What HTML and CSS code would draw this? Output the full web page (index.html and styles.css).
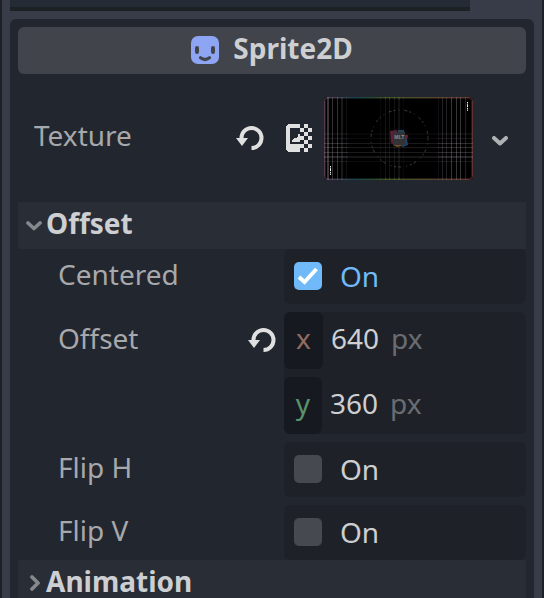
FILE: index.html
```html
<!DOCTYPE html>
<html lang="en">
<head>
<meta charset="utf-8">
<title>Inspector</title>
<link rel="stylesheet" href="styles.css">
</head>
<body>
<div class="dock">
  <div class="topbar"></div>
  <main class="panel">
    <header class="class-header">
      <svg class="sprite-icon" width="28" height="28" viewBox="0 0 28 28"><rect width="28" height="28" rx="7" fill="#8da5f3"/><rect x="4" y="10" width="4" height="8" rx="2" fill="#414549"/><rect x="20" y="10" width="4" height="8" rx="2" fill="#414549"/><path d="M9.500 21.800q4.500 3.400 9 0" fill="none" stroke="#414549" stroke-width="3.200" stroke-linecap="round"/></svg>
      <span>Sprite2D</span>
    </header>

    <section class="texture-row">
      <span class="label">Texture</span>
      <svg class="reset" width="28" height="28" viewBox="0 0 28 28"><path d="M5.500 14A10 10 0 1 1 15.500 24" fill="none" stroke="#e0e0e0" stroke-width="4"/><path d="M0 14h12l-6 8z" fill="#e0e0e0"/></svg>
      <svg class="texture-icon" width="26" height="28" viewBox="0 0 26 28" fill="#e0e0e0" shape-rendering="crispEdges"><path d="M2 0H14V4H4V20H14V28H2L0 26V2zM6 18V16L8 14H10L12 12V10H14V18z"/><path d="M18 0h4v4h-4zM14 4h4v4h-4zM22 4h4v4h-4zM18 8h4v4h-4zM14 12h4v4h-4zM22 12h4v4h-4zM18 16h4v4h-4zM14 20h4v4h-4zM22 20h4v4h-4zM18 24h4v4h-4z"/></svg>
      <svg class="thumb" width="149" height="83" viewBox="0 0 149 83">
        <defs>
          <linearGradient id="edge"><stop offset="0" stop-color="#563950"/><stop offset=".22" stop-color="#16444a"/><stop offset=".42" stop-color="#3d531d"/><stop offset=".65" stop-color="#514a2d"/><stop offset="1" stop-color="#633232"/></linearGradient>
          <radialGradient id="glow"><stop offset="0" stop-color="#555"/><stop offset="1" stop-color="#000" stop-opacity="0"/></radialGradient>
        </defs>
        <rect width="149" height="83" rx="3" fill="#010102"/>
        <rect x=".5" y=".5" width="148" height="82" rx="3" fill="none" stroke="url(#edge)"/>
        <rect x="1.500" y="1.500" width="146" height="80" rx="2" fill="none" stroke="url(#edge)" opacity=".4"/>
        <g stroke="#aaa0a8" fill="none">
          <path d="M4 0V83" stroke-width="2" opacity=".34"/>
          <path d="M8.500 0V83M13.500 0V83" opacity=".3"/>
          <path d="M18 0V83" stroke-width="2" opacity=".15"/>
          <path d="M22.500 0V83M56.500 0V83M79.500 0V83M114.500 0V83" opacity=".09"/>
          <path d="M61.500 0V83M65.500 0V83M70.500 0V83" opacity=".2"/>
          <path d="M75 0V83" stroke-width="2" opacity=".18"/>
          <path d="M118.500 0V83M122.500 0V83M141.500 0V83" opacity=".2"/>
          <path d="M127.500 0V83M132.500 0V83M136.500 0V83" opacity=".33"/>
          <path d="M0 37H149" stroke-width="2" opacity=".08"/>
          <path d="M0 41.500H149M0 64.500H149" opacity=".13"/>
          <path d="M0 46.500H149M0 50.500H149M0 55.500H149" opacity=".27"/>
          <path d="M0 60H149" stroke-width="2" opacity=".22"/>
        </g>
        <rect x="24" y="3" width="90" height="77" fill="#000" opacity=".4"/>
        <circle cx="75.500" cy="41.500" r="28.500" fill="none" stroke="#59605d" stroke-width=".8" stroke-dasharray="2 3 1 5 3 2" opacity=".8"/>
        <circle cx="75.500" cy="41.500" r="14" fill="url(#glow)" opacity=".6"/>
        <path d="M66 34l7-1 2 9-2 6-6-2z" fill="#5c2036"/><path d="M74 33h6l1 5h-7z" fill="#204257"/><path d="M79 38l5 1-1 3 1 6-5 2-4-2z" fill="#213f6b"/><path d="M69 45h10l-2 4-4 1-4-2z" fill="#735222"/><path d="M80 38h4l-1 4h-3z" fill="#602433"/>
        <rect x="69" y="35" width="12" height="13" rx="1" fill="#313335"/>
        <text class="thumb-text" x="75.300" y="41.500">MLT</text>
        <path d="M143.500 5v9M6.500 69v9" stroke="#eee" stroke-dasharray="1.500 .7 3 .8" fill="none"/>
      </svg>
      <svg class="chevron" width="16" height="10" viewBox="0 0 16 10"><path d="M2 2l6 5.500L14 2" fill="none" stroke="#b0b1b5" stroke-width="4" stroke-linecap="round" stroke-linejoin="round"/></svg>
    </section>

    <div class="section">
      <svg class="fold open" width="16" height="10" viewBox="0 0 16 10"><path d="M2 2L8 7.500L14 2" fill="none" stroke="#85888d" stroke-width="3.700" stroke-linecap="round" stroke-linejoin="round"/></svg>
      <span>Offset</span>
    </div>

    <div class="property">
      <span class="label">Centered</span>
      <div class="field check-field on">
        <svg class="check" width="28" height="28" viewBox="0 0 28 28"><path d="M5 15l5.500 5L22.500 7" fill="none" stroke="#fff" stroke-width="4"/></svg>
        <span>On</span>
      </div>
    </div>

    <div class="property gap">
      <span class="label low">Offset</span>
      <svg class="reset" width="28" height="28" viewBox="0 0 28 28"><path d="M5.500 14A10 10 0 1 1 15.500 24" fill="none" stroke="#e0e0e0" stroke-width="4"/><path d="M0 14h12l-6 8z" fill="#e0e0e0"/></svg>
      <div class="field vector">
        <div class="axis"><b class="tag x">x</b><span class="number">640</span><span class="unit">px</span></div>
        <div class="axis"><b class="tag y">y</b><span class="number">360</span><span class="unit">px</span></div>
      </div>
    </div>

    <div class="property gap">
      <span class="label">Flip H</span>
      <div class="field check-field"><i class="check"></i><span>On</span></div>
    </div>
    <div class="property gap">
      <span class="label">Flip V</span>
      <div class="field check-field"><i class="check"></i><span>On</span></div>
    </div>

    <div class="section">
      <svg class="fold" width="16" height="16" viewBox="0 0 16 16"><path d="M6 2L12 8l-6 6" fill="none" stroke="#85888d" stroke-width="3.700" stroke-linecap="round" stroke-linejoin="round"/></svg>
      <span>Animation</span>
    </div>
  </main>
</div>
</body>
</html>
```
FILE: styles.css
```css
* { box-sizing: border-box; }
body {
  margin: 0;
  height: 598px;
  overflow: hidden;
  background: #1d2027;
  color: #cdcfd2;
  font: 28px/38px "Noto Sans", sans-serif;
}
svg { display: block; flex: none; }
.dock {
  height: 598px;
  margin: 0 2px;
  padding: 0 8px;
  background: #383c48;
}
.topbar {
  width: 460px;
  height: 11px;
  background: #252b35;
  border-bottom: 4px solid #1d2025;
}
.panel {
  height: 590px;
  margin-top: 8px;
  padding: 8px 8px 0;
  border-radius: 6px 6px 0 0;
  background: #22262e;
}
.class-header {
  display: flex;
  align-items: center;
  justify-content: center;
  gap: 14px;
  height: 47px;
  border-radius: 6px;
  background: #41444b;
  font-weight: 700;
}
.sprite-icon { margin-bottom: 1px; }
.class-header span { padding-bottom: 5px; }
.texture-row {
  display: flex;
  align-items: center;
  height: 128px;
  padding-left: 16px;
}
.label { color: #a7a8ab; }
.texture-row .label { width: 202px; padding-bottom: 6px; }
.texture-icon { margin-left: 22px; }
.thumb { margin-left: 12px; }
.thumb-text {
  fill: #8c8c8c;
  font: 700 5px "Liberation Sans", sans-serif;
  text-anchor: middle;
}
.chevron { margin: 5px 0 0 19px; }
.section {
  display: flex;
  align-items: center;
  height: 47px;
  padding-left: 8px;
  background: #292d35;
  font-weight: 700;
}
.section span { margin-left: 4px; padding-bottom: 5px; }
.fold { margin-bottom: 1px; }
.fold.open { margin: 1px 0 0; }
.property {
  display: flex;
  justify-content: flex-end;
  padding-left: 40px;
}
.property.gap { margin-top: 8px; }
.property .label { flex: 1; padding-top: 6px; }
.property .low { padding-top: 7px; }
.property .reset { margin: 14px 8px 0 0; }
.field {
  width: 242px;
  border-radius: 6px;
  background: #1e2228;
}
.check-field {
  display: flex;
  align-items: center;
  gap: 18px;
  height: 55px;
  padding: 0 0 1px 10px;
}
.check {
  width: 28px;
  height: 28px;
  border-radius: 5px;
  background: #464950;
}
.on { color: #70bafa; }
.on .check { background: #70bafa; }
.vector { display: grid; gap: 8px; }
.axis { display: flex; height: 57px; line-height: 52px; }
.tag {
  width: 38px;
  border-radius: 6px;
  background: #171920;
  font-weight: 400;
  text-align: center;
}
.x { width: 39px; color: #936b5f; }
.y { color: #57946b; }
.number { margin-left: 8px; }
.unit { margin-left: 12px; color: #696c71; }
```
